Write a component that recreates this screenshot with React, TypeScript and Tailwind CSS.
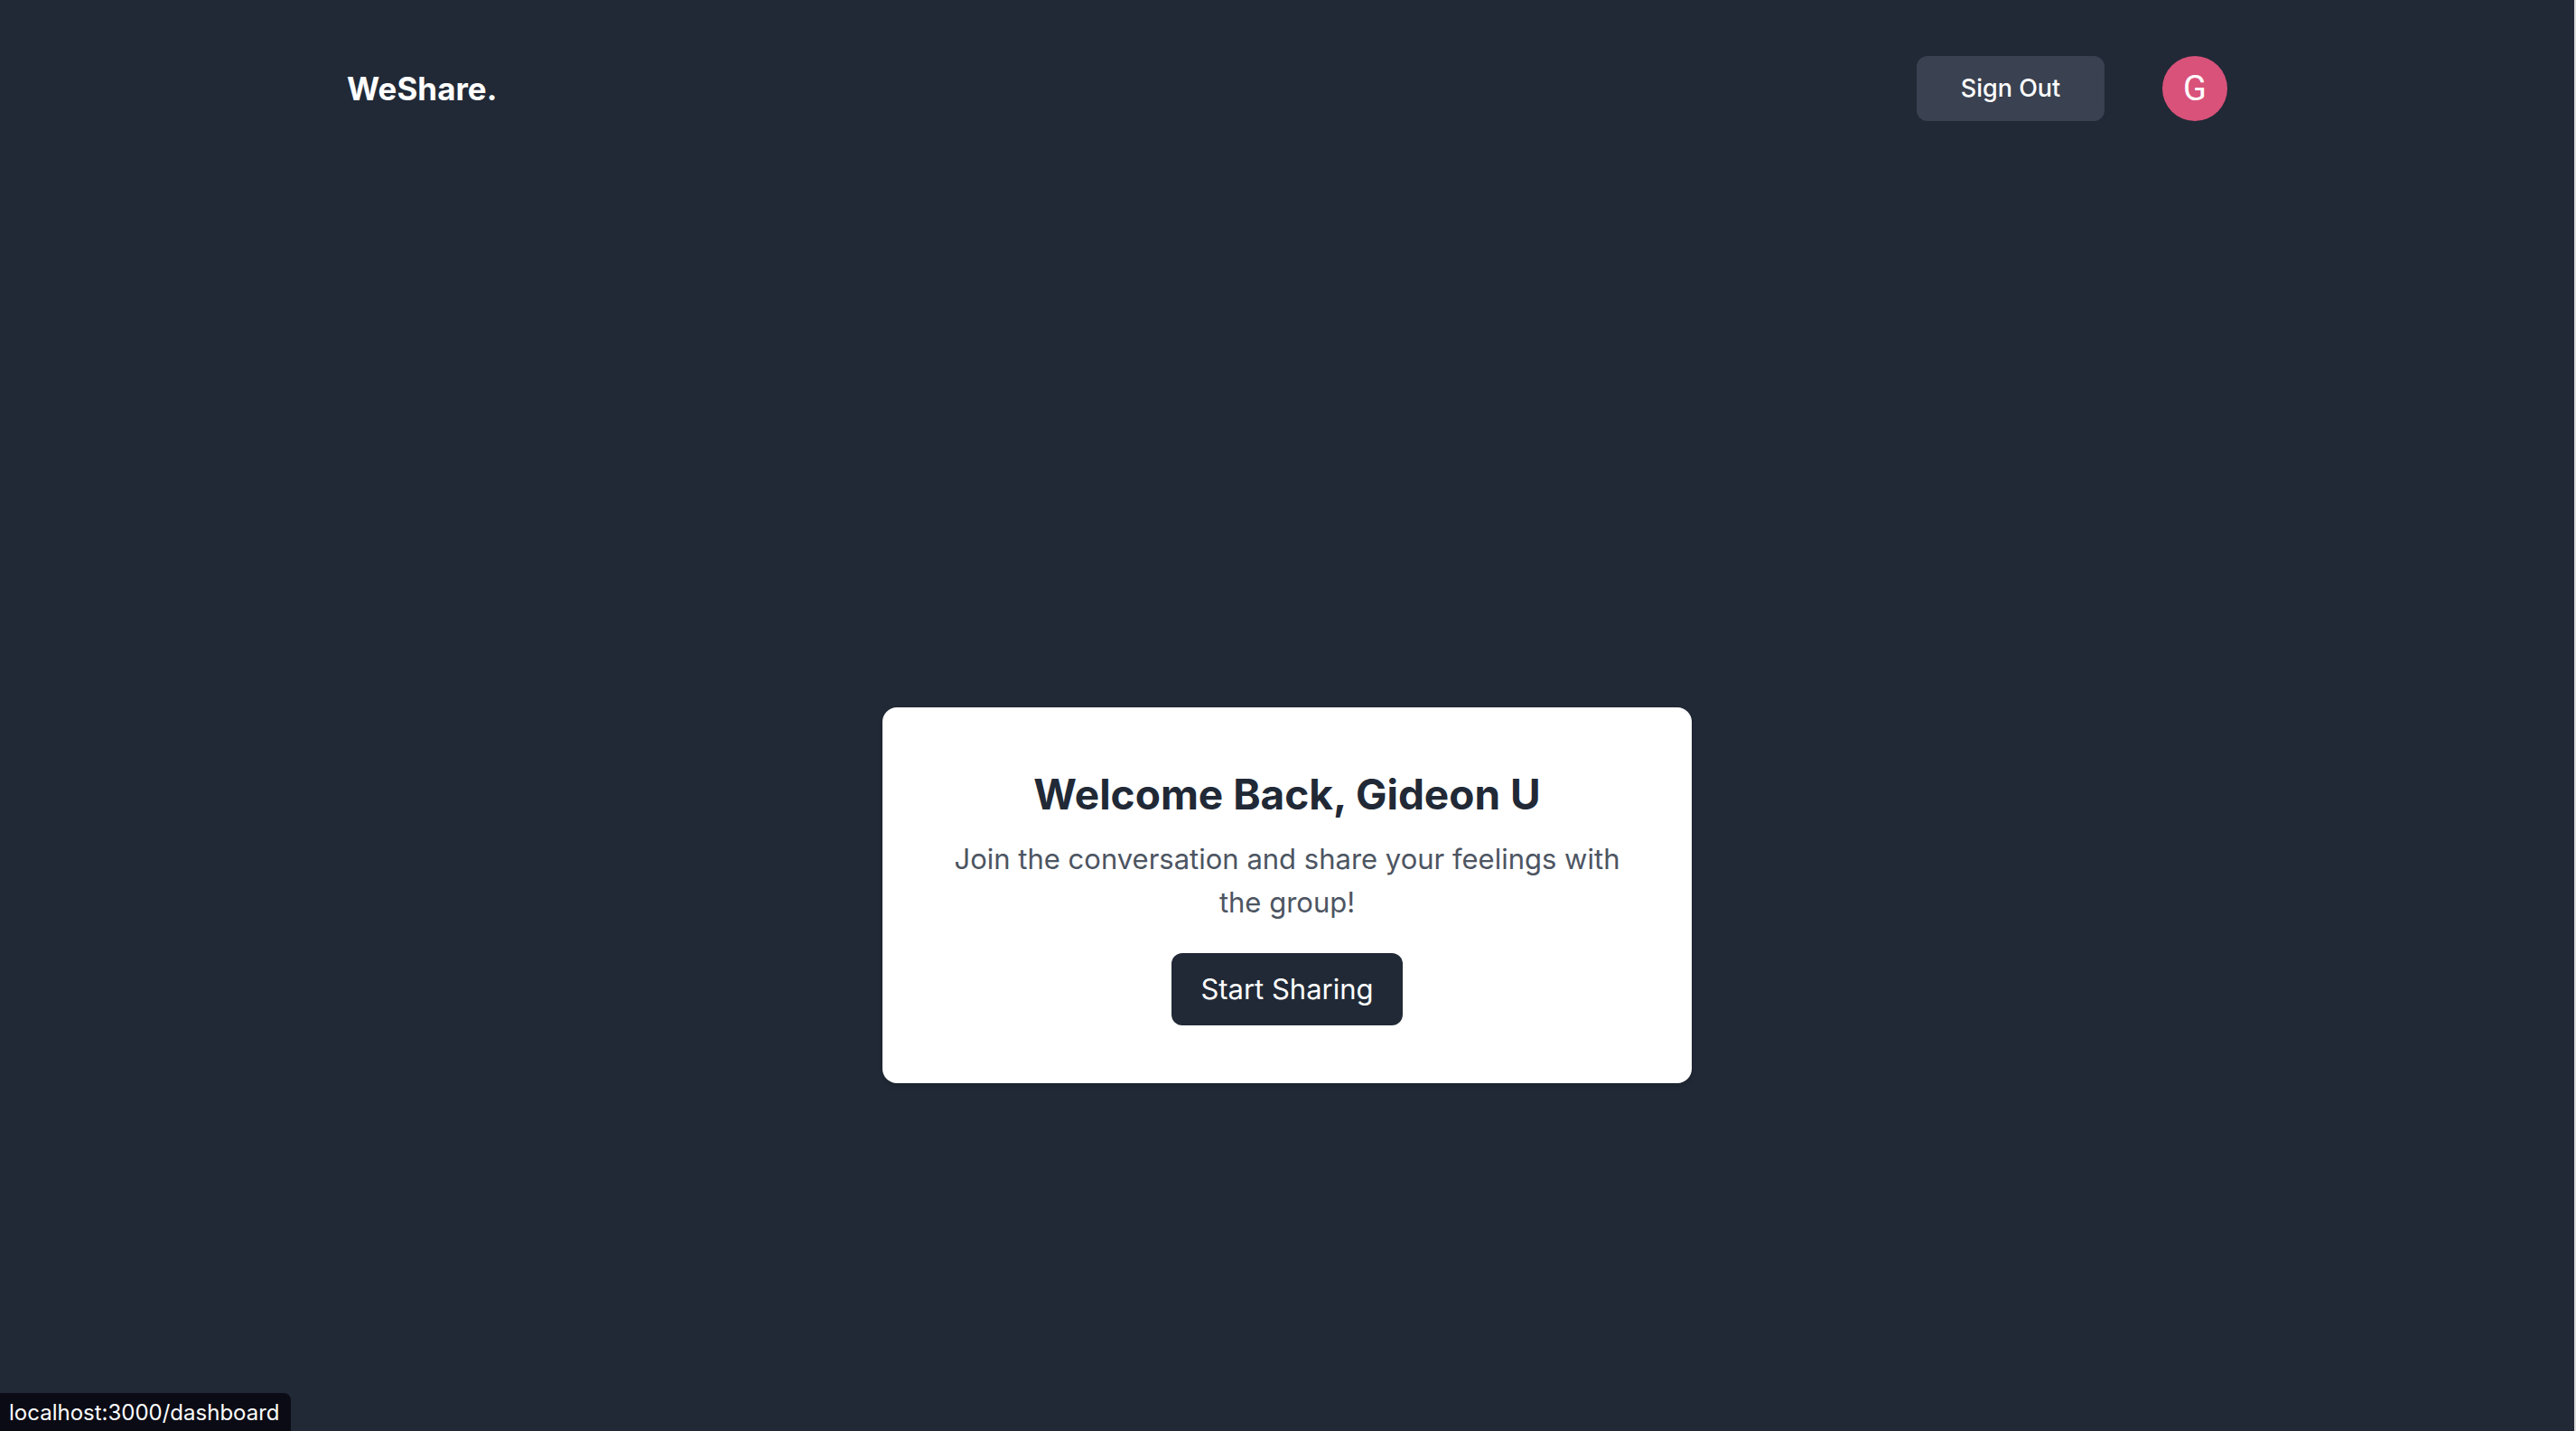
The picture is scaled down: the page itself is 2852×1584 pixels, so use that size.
export default function App() {
  return (
    <div className="relative flex min-h-screen flex-col border-r-2 border-[#dcdcde] bg-[#212936] font-[Inter,sans-serif]">
      <header className="mx-auto flex w-full max-w-[2082px] items-center justify-between py-[62px]">
        <a href="#" className="text-[35px] leading-[56px] font-bold text-white">WeShare.</a>
        <nav className="flex items-center gap-16">
          <button className="w-[208px] rounded-xl bg-[#3a4150] py-4 text-[27px] leading-10 font-medium text-white">Sign Out</button>
          <button aria-label="Account" className="flex size-[72px] items-center justify-center rounded-full bg-[#d9527a] font-[Roboto,sans-serif] text-[38px] text-white">G</button>
        </nav>
      </header>
      <main className="flex flex-1 flex-col items-center justify-center pt-[202px]">
        <section className="w-[896px] rounded-2xl bg-white p-16 text-center shadow-md">
          <h1 className="text-[46px] leading-[64px] font-bold text-[#212936]">Welcome Back, Gideon U</h1>
          <p className="mt-4 text-[31px] leading-[48px] text-[#4d5562]">Join the conversation and share your feelings with the group!</p>
          <a href="#" className="mt-8 inline-block rounded-xl bg-[#212936] px-8 py-4 text-[31px] leading-[48px] text-white">Start Sharing</a>
        </section>
      </main>
      <div className="absolute bottom-0 left-0 rounded-tr-lg bg-[#0b0b15] pt-0.5 pr-3 pl-[10px] text-2xl leading-10 text-white">localhost:3000/dashboard</div>
    </div>
  );
}
